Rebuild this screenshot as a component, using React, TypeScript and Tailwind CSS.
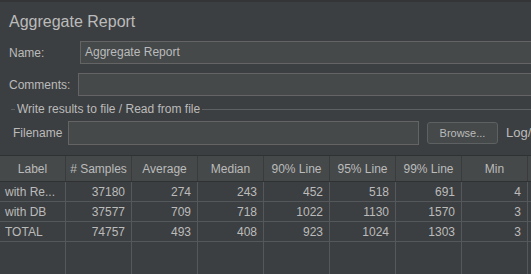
import React from 'react';

const cols = ['Label', '# Samples', 'Average', 'Median', '90% Line', '95% Line', '99% Line', 'Min', ''];

const rows = [
  ['with Re...', '37180', '274', '243', '452', '518', '691', '4', ''],
  ['with DB', '37577', '709', '718', '1022', '1130', '1570', '3', ''],
  ['TOTAL', '74757', '493', '408', '923', '1024', '1303', '3', ''],
];

const colW = 'w-[66px] shrink-0';

export default function App() {
  return (
    <div
      className="w-[531px] h-[274px] overflow-hidden bg-[#3c3f41] text-[#bbbbbb] border-t-2 border-[#333536]"
      style={{ fontFamily: '"Liberation Sans", Arial, sans-serif' }}
    >
      {/* 标题 */}
      <div className="pl-[9px] pt-[10px] h-[36px] text-[16px] leading-[20px]">Aggregate Report</div>

      {/* Name */}
      <div className="flex items-center h-[23px] mt-[3px]">
        <span className="w-[80px] pl-[9px] text-[12px] shrink-0">Name:</span>
        <div className="flex-1 h-[23px] bg-[#45494a] border border-[#646464] border-r-0 pl-[4px] text-[12px] leading-[21px]">
          Aggregate Report
        </div>
      </div>

      {/* Comments */}
      <div className="flex items-center h-[23px] mt-[9px]">
        <span className="w-[78px] pl-[9px] text-[12px] shrink-0">Comments:</span>
        <div className="flex-1 h-[23px] bg-[#45494a] border border-[#646464] border-r-0" />
      </div>

      {/* 文件区域 */}
      <div className="flex items-center mt-[5px] h-[16px]">
        <div className="w-[4px] ml-[11px] h-px bg-[#5e6162]" />
        <span className="px-[2px] text-[12px]">Write results to file / Read from file</span>
        <div className="flex-1 h-px bg-[#5e6162]" />
      </div>

      <div className="flex items-center mt-[4px] h-[24px]">
        <span className="w-[68px] pl-[13px] text-[12px] shrink-0">Filename</span>
        <div className="w-[351px] h-[24px] bg-[#45494a] border border-[#646464] shrink-0" />
        <button className="ml-[8px] w-[71px] h-[22px] rounded-[3px] border border-[#5e6162] bg-[#45494a] text-[11px] text-[#bbbbbb] shrink-0">
          Browse...
        </button>
        <span className="ml-[8px] text-[13px] whitespace-nowrap">Log/Display Only:</span>
      </div>

      {/* 表格 */}
      <div className="mt-[10px]">
        <div className="flex h-[27px] border-t border-b border-[#2f3133] bg-[#45494a]">
          {cols.map((c, i) => (
            <div
              key={i}
              className={`${colW} border-r border-[#393b3d] flex items-center justify-center text-[12px] whitespace-nowrap`}
            >
              {c}
            </div>
          ))}
        </div>
        {rows.map((r, ri) => (
          <div key={ri} className="flex h-[20px] border-b border-[#54585a]">
            {r.map((v, i) => (
              <div
                key={i}
                className={`${colW} border-r border-[#54585a] flex items-center text-[12px] whitespace-nowrap ${
                  i === 0 ? 'pl-[5px]' : 'justify-end pr-[6px]'
                }`}
              >
                {v}
              </div>
            ))}
          </div>
        ))}
        <div className="flex h-[40px]">
          {cols.map((_, i) => (
            <div key={i} className={`${colW} border-r border-[#54585a]`} />
          ))}
        </div>
      </div>
    </div>
  );
}
